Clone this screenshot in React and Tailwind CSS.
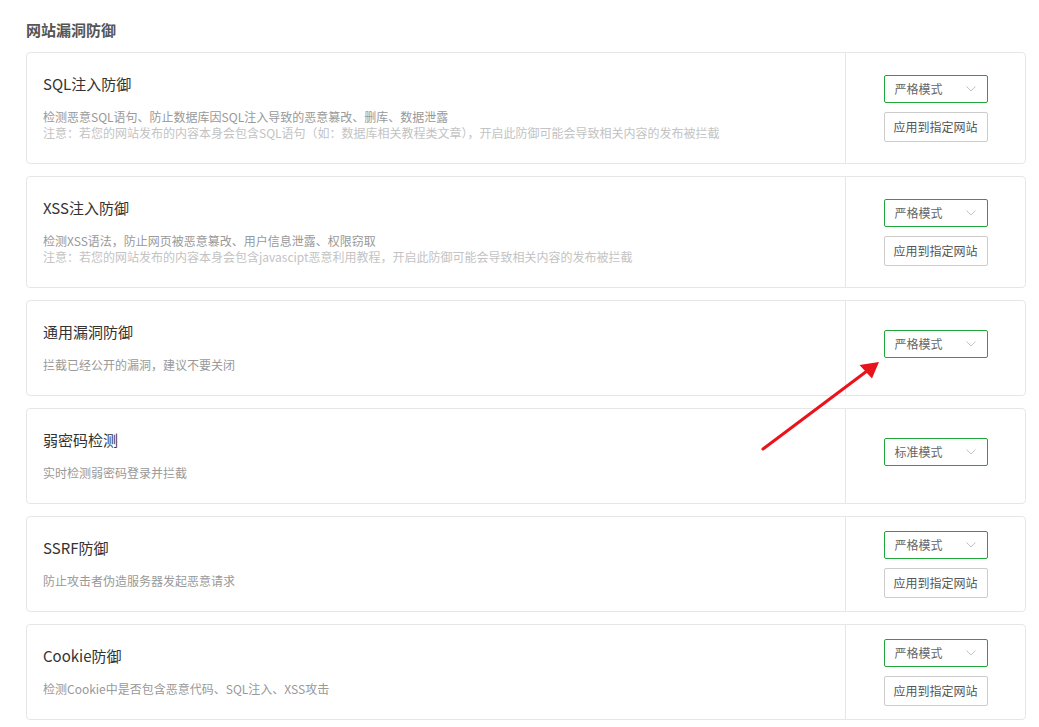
import React from "react";

const items = [
  {
    title: "SQL注入防御",
    desc: "检测恶意SQL语句、防止数据库因SQL注入导致的恶意篡改、删库、数据泄露",
    note: "注意：若您的网站发布的内容本身会包含SQL语句（如：数据库相关教程类文章），开启此防御可能会导致相关内容的发布被拦截",
    mode: "严格模式",
    btn: true,
  },
  {
    title: "XSS注入防御",
    desc: "检测XSS语法，防止网页被恶意篡改、用户信息泄露、权限窃取",
    note: "注意：若您的网站发布的内容本身会包含javascipt恶意利用教程，开启此防御可能会导致相关内容的发布被拦截",
    mode: "严格模式",
    btn: true,
  },
  {
    title: "通用漏洞防御",
    desc: "拦截已经公开的漏洞，建议不要关闭",
    mode: "严格模式",
    btn: false,
  },
  {
    title: "弱密码检测",
    desc: "实时检测弱密码登录并拦截",
    mode: "标准模式",
    btn: false,
  },
  {
    title: "SSRF防御",
    desc: "防止攻击者伪造服务器发起恶意请求",
    mode: "严格模式",
    btn: true,
  },
  {
    title: "Cookie防御",
    desc: "检测Cookie中是否包含恶意代码、SQL注入、XSS攻击",
    mode: "严格模式",
    btn: true,
  },
];

function Chevron() {
  return (
    <svg width="10" height="6" viewBox="0 0 10 6" fill="none">
      <path d="M0.5 0.5 L5 5 L9.5 0.5" stroke="#c4c4c4" strokeWidth="1" />
    </svg>
  );
}

function Card({ item }) {
  return (
    <div className="flex rounded-[4px] border border-[#e6e6e6] bg-white">
      <div className="flex-1 pl-[16px] pt-[21px] pb-[22px]">
        <div className="text-[15px] leading-[20px] text-[#333]">{item.title}</div>
        <div className="mt-[15px] text-[12px] leading-[16px] text-[#999]">{item.desc}</div>
        {item.note && (
          <div className="text-[12px] leading-[16px] text-[#c3c3c3]">{item.note}</div>
        )}
      </div>
      <div className="flex w-[180px] flex-col items-center justify-center border-l border-[#e6e6e6]">
        <div className="mb-[9px] flex h-[28px] w-[104px] items-center justify-between rounded-[2px] border border-[#20a53a] pl-[10px] pr-[11px] text-[12px] text-[#666]">
          <span>{item.mode}</span>
          <Chevron />
        </div>
        {item.btn && (
          <div className="flex h-[30px] w-[104px] items-center justify-center rounded-[2px] border border-[#cccccc] text-[12px] text-[#555]">
            应用到指定网站
          </div>
        )}
      </div>
    </div>
  );
}

export default function App() {
  return (
    <div
      className="relative min-h-[727px] bg-white pl-[26px] pr-[13px] pt-[20px]"
      style={{ fontFamily: '"Noto Sans CJK SC", "Noto Sans", sans-serif' }}
    >
      <div className="mb-[12px] text-[15px] font-bold leading-[20px] text-[#555]">网站漏洞防御</div>
      <div className="flex flex-col gap-[12px]">
        {items.map((it) => (
          <Card key={it.title} item={it} />
        ))}
      </div>
      <svg
        className="pointer-events-none absolute left-0 top-0"
        width="1039"
        height="727"
        viewBox="0 0 1039 727"
      >
        <line x1="763" y1="449" x2="867" y2="371" stroke="#e8141c" strokeWidth="3" strokeLinecap="round" />
        <polygon points="879,362 859.5,365 872,378.5" fill="#e8141c" />
      </svg>
    </div>
  );
}
